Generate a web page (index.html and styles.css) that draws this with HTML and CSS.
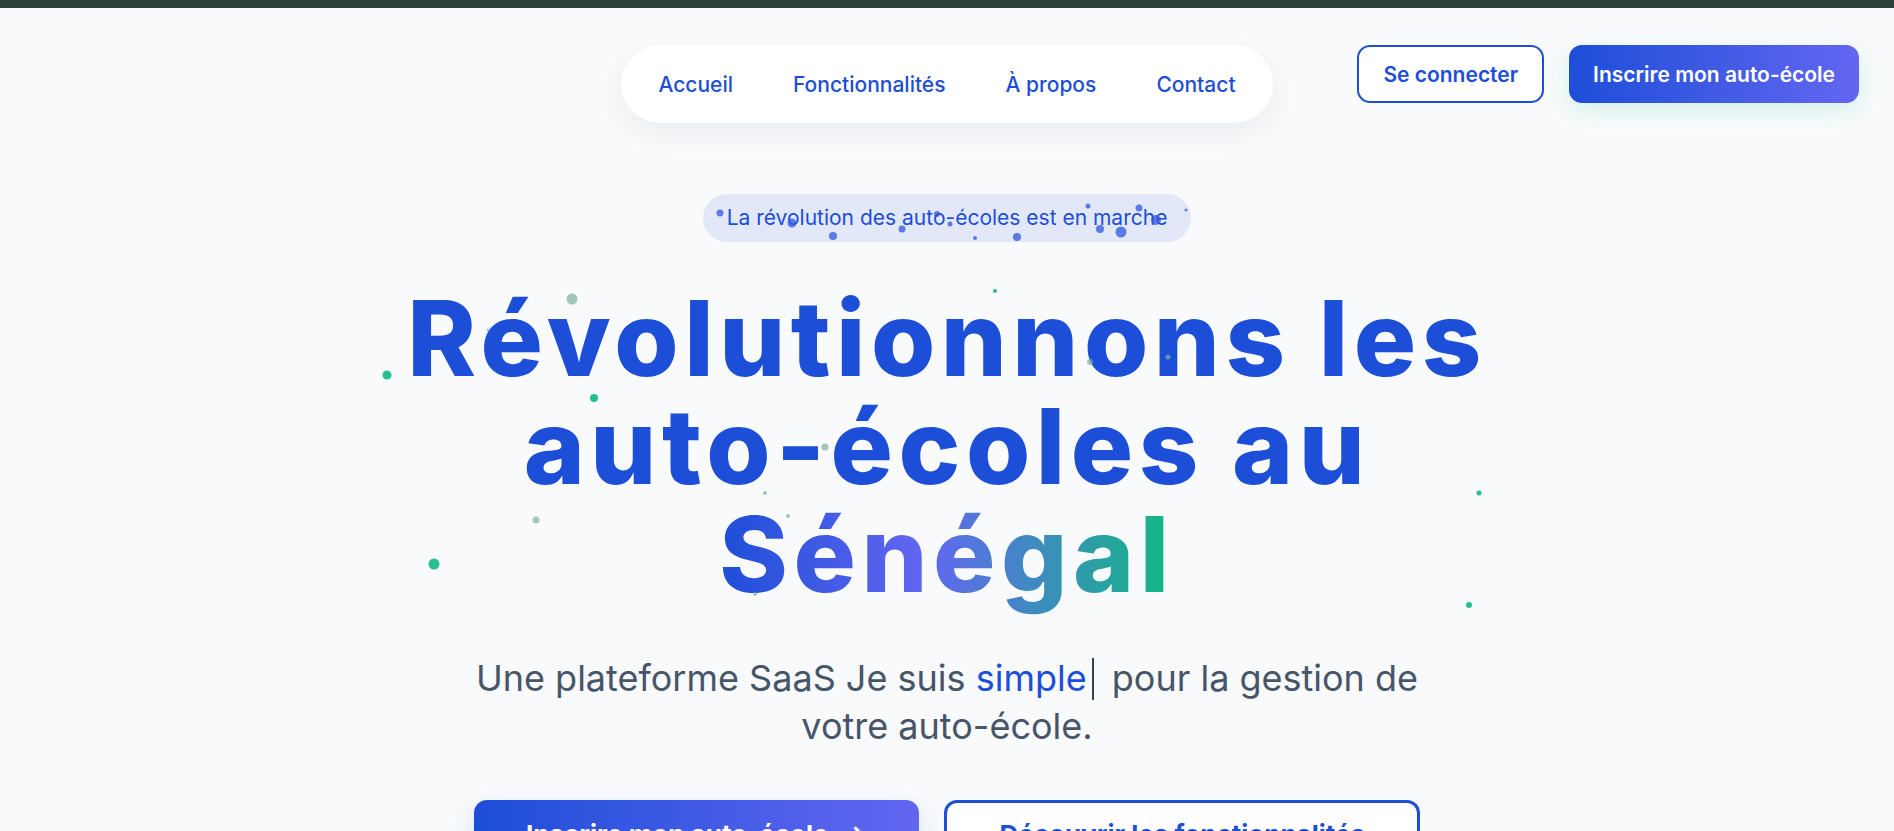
FILE: index.html
```html
<!DOCTYPE html>
<html lang="fr">
<head>
<meta charset="utf-8">
<title>Auto-écoles Sénégal</title>
<link rel="stylesheet" href="styles.css">
</head>
<body>
<div class="topbar"></div>
<header class="site-header">
  <div class="brand"></div>
  <nav class="main-nav">
    <a href="#">Accueil</a>
    <a href="#">Fonctionnalités</a>
    <a href="#">À propos</a>
    <a href="#">Contact</a>
  </nav>
  <div class="header-actions">
    <a class="btn btn-outline" href="#">Se connecter</a>
    <a class="btn btn-primary" href="#">Inscrire mon auto-école</a>
  </div>
</header>

<main class="hero">
  <svg class="particles" width="1894" height="831" viewBox="0 0 1894 831" aria-hidden="true">
    <g class="p-blue">
      <circle cx="720" cy="213" r="3.5"/>
      <circle cx="792" cy="223" r="4.5"/>
      <circle cx="833" cy="236" r="4"/>
      <circle cx="902" cy="229" r="3.5"/>
      <circle cx="937" cy="214" r="3"/>
      <circle cx="950" cy="224" r="2.5"/>
      <circle cx="975" cy="238" r="2"/>
      <circle cx="1017" cy="237" r="4"/>
      <circle cx="1088" cy="206" r="2.5"/>
      <circle cx="1100" cy="229" r="4"/>
      <circle cx="1121" cy="232" r="5.5"/>
      <circle cx="1139" cy="208" r="3.5"/>
      <circle cx="1156" cy="220" r="5"/>
      <circle cx="1186" cy="210" r="1.5"/>
    </g>
    <g class="p-green">
      <circle cx="387" cy="375" r="4.5"/>
      <circle cx="594" cy="398" r="4"/>
      <circle cx="434" cy="564" r="5.5"/>
      <circle cx="995" cy="291" r="2"/>
      <circle cx="1479" cy="493" r="2.5"/>
      <circle cx="1469" cy="605" r="3"/>
    </g>
    <g class="p-grey">
      <circle cx="572" cy="299" r="5.5"/>
      <circle cx="488" cy="330" r="1.5"/>
      <circle cx="536" cy="520" r="3.5"/>
      <circle cx="825" cy="447" r="3.5"/>
      <circle cx="765" cy="493" r="2"/>
      <circle cx="788" cy="516" r="2"/>
      <circle cx="1090" cy="362" r="3"/>
      <circle cx="1168" cy="357" r="2.5"/>
      <circle cx="755" cy="594" r="2"/>
    </g>
  </svg>

  <p class="badge">La révolution des auto-écoles est en marche</p>
  <h1 class="hero-title">Révolutionnons les<br>auto-écoles au<br><span class="accent">Sénégal</span></h1>
  <p class="hero-lead">Une plateforme SaaS Je suis <span class="typed">simple</span><span class="caret"></span> pour la gestion de votre auto-école.</p>
  <div class="hero-actions">
    <a class="btn-lg btn-lg-primary" href="#">Inscrire mon auto-école <span class="arrow">→</span></a>
    <a class="btn-lg btn-lg-outline" href="#">Découvrir les fonctionnalités</a>
  </div>
</main>
</body>
</html>
```

FILE: styles.css
```css
* {
  box-sizing: border-box;
}

html,
body {
  margin: 0;
  padding: 0;
}

body {
  background: #f8fafc;
  font-family: Inter, "Noto Sans", sans-serif;
  color: #0f172a;
  overflow: hidden;
  height: 831px;
}

a {
  text-decoration: none;
}

.topbar {
  height: 8px;
  background: #2c3f38;
}

/* header */
.site-header {
  display: grid;
  grid-template-columns: 1fr auto 1fr;
  align-items: start;
  padding: 37px 35px 0;
}

.main-nav {
  display: flex;
  align-items: center;
  gap: 60px;
  height: 78px;
  padding: 0 37px;
  background: #ffffff;
  border-radius: 9999px;
  box-shadow: 0 10px 30px rgba(15, 23, 42, 0.06);
}

.main-nav a {
  color: #1d4ed8;
  font-size: 21px;
  font-weight: 500;
}

.header-actions {
  justify-self: end;
  display: flex;
  gap: 25px;
}

.btn {
  display: inline-flex;
  align-items: center;
  justify-content: center;
  height: 58px;
  padding: 0 24px;
  border-radius: 13px;
  font-size: 21px;
  font-weight: 600;
}

.btn-outline {
  color: #1d4ed8;
  background: #ffffff;
  border: 2.5px solid #1d4ed8;
}

.btn-primary {
  color: #ffffff;
  background: linear-gradient(90deg, #1d4ed8, #6366f1);
  box-shadow: 0 8px 22px rgba(16, 185, 129, 0.14);
}

/* hero */
.hero {
  position: relative;
  text-align: center;
  padding-top: 71px;
}

.particles {
  position: absolute;
  left: 0;
  top: -123px;
  pointer-events: none;
  z-index: 2;
}

.p-blue circle {
  fill: #2f56dc;
  fill-opacity: 0.75;
}

.p-green circle {
  fill: #10b981;
  fill-opacity: 0.9;
}

.p-grey circle {
  fill: #7fae9f;
  fill-opacity: 0.7;
}

.badge {
  display: inline-block;
  margin: 0;
  height: 48px;
  line-height: 48px;
  padding: 0 24px;
  border-radius: 9999px;
  background: #e2e8f7;
  color: #1d4ed8;
  font-size: 21px;
  font-weight: 400;
}

.hero-title {
  margin: 42px auto 0;
  font-size: 104px;
  line-height: 108px;
  font-weight: 800;
  letter-spacing: 5.5px;
  color: #1d4ed8;
}

.accent {
  background: linear-gradient(90deg, #1d4ed8 0%, #6366f1 45%, #10b981 100%);
  -webkit-background-clip: text;
  background-clip: text;
  color: transparent;
}

.hero-lead {
  max-width: 1000px;
  margin: 46px auto 0;
  font-size: 36px;
  line-height: 48px;
  color: #475569;
}

.typed {
  color: #1d4ed8;
}

.caret {
  display: inline-block;
  width: 2px;
  height: 42px;
  margin: 0 8px 0 5px;
  vertical-align: -9px;
  background: #334155;
}

.hero-actions {
  display: flex;
  justify-content: center;
  gap: 25px;
  margin-top: 50px;
}

.btn-lg {
  display: inline-flex;
  align-items: center;
  justify-content: center;
  gap: 14px;
  height: 68px;
  padding: 0 52px;
  border-radius: 13px;
  font-size: 26px;
  font-weight: 700;
}

.btn-lg-primary {
  color: #ffffff;
  background: linear-gradient(90deg, #1d4ed8, #6366f1);
  box-shadow: 0 10px 25px rgba(29, 78, 216, 0.15);
}

.btn-lg-outline {
  color: #1d4ed8;
  background: #ffffff;
  border: 3px solid #1d4ed8;
}
```
